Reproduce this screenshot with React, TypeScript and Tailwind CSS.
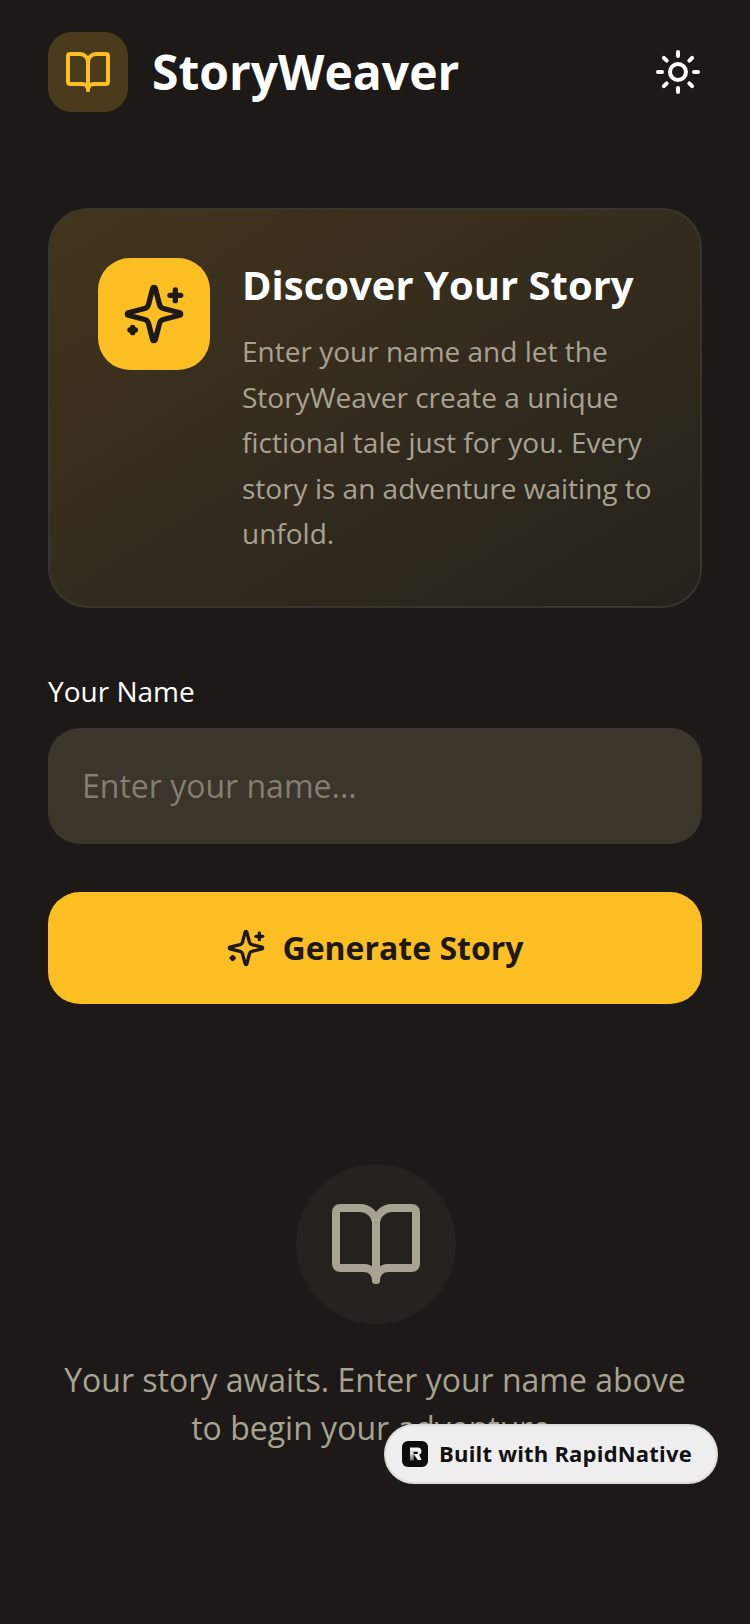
const font = "font-['Open_Sans','Noto_Sans',sans-serif]";

type IconProps = {
  size: number;
  strokeWidth?: number;
  className?: string;
};

const Icon = ({ size, strokeWidth = 2, className, children }: IconProps & { children: React.ReactNode }) => (
  <svg
    width={size}
    height={size}
    viewBox="0 0 24 24"
    fill="none"
    stroke="currentColor"
    strokeWidth={strokeWidth}
    strokeLinecap="round"
    strokeLinejoin="round"
    className={className}
  >
    {children}
  </svg>
);

const SparklesIcon = (props: IconProps) => (
  <Icon {...props}>
    <path d="M9.937 15.5A2 2 0 0 0 8.5 14.063l-6.135-1.582a.5.5 0 0 1 0-.962L8.5 9.936A2 2 0 0 0 9.937 8.5l1.582-6.135a.5.5 0 0 1 .963 0L14.063 8.5A2 2 0 0 0 15.5 9.937l6.135 1.581a.5.5 0 0 1 0 .964L15.5 14.063a2 2 0 0 0-1.437 1.437l-1.582 6.135a.5.5 0 0 1-.963 0z" />
    <path d="M20 3v4" />
    <path d="M22 5h-4" />
    <path d="M4 17v2" />
    <path d="M5 18H3" />
  </Icon>
);

const BookIcon = (props: IconProps) => (
  <Icon {...props}>
    <path d="M12 7v14" />
    <path d="M3 18a1 1 0 0 1-1-1V4a1 1 0 0 1 1-1h5a4 4 0 0 1 4 4 4 4 0 0 1 4-4h5a1 1 0 0 1 1 1v13a1 1 0 0 1-1 1h-6a3 3 0 0 0-3 3 3 3 0 0 0-3-3z" />
  </Icon>
);

const SunIcon = (props: IconProps) => (
  <Icon {...props}>
    <circle cx="12" cy="12" r="4" />
    <path d="M12 2v2" />
    <path d="M12 20v2" />
    <path d="m4.93 4.93 1.41 1.41" />
    <path d="m17.66 17.66 1.41 1.41" />
    <path d="M2 12h2" />
    <path d="M20 12h2" />
    <path d="m6.34 17.66-1.41 1.41" />
    <path d="m19.07 4.93-1.41 1.41" />
  </Icon>
);

const RapidLogo = () => (
  <div className="flex h-[26px] w-[26px] items-center justify-center rounded-[6px] bg-[#0d0d0e]">
    <svg width="20" height="20" viewBox="0 0 20 20">
      <defs>
        <linearGradient id="rapid-stem" x1="0" y1="0" x2="0" y2="1">
          <stop offset="0" stopColor="#f2f2f2" />
          <stop offset="1" stopColor="#6b6b6b" />
        </linearGradient>
      </defs>
      <path d="M5 3.5h7.5c2.6 0 4 1.5 4 3.7 0 1.7-1 3-2.5 3.4l2.6 5.4h-3.9L8.6 10h3.2c.8 0 1.1-.5 1.1-1.1s-.3-1.1-1.1-1.1H5z" fill="#f2f2f2" />
      <path d="M5 7.8h3.6v8.7H5z" fill="url(#rapid-stem)" />
    </svg>
  </div>
);

const App = () => {
  return (
    <div className={`relative h-[1624px] w-[750px] overflow-hidden bg-[#1c1917] ${font}`}>
      <header className="flex items-center justify-between px-12 pt-8">
        <div className="flex items-center gap-6">
          <div className="flex h-20 w-20 items-center justify-center rounded-3xl bg-[#4a3b1c]">
            <BookIcon size={48} className="text-[#fbbf24]" />
          </div>
          <h1 className="text-5xl leading-[60px] font-bold text-white">StoryWeaver</h1>
        </div>
        <SunIcon size={48} className="text-white" />
      </header>

      <main className="px-12 pt-24">
        <section className="flex gap-8 rounded-[40px] border-2 border-[#3a352c] bg-gradient-to-br from-[#42351c] to-[#25221d] px-12 pt-12 pb-[49px]">
          <div className="flex h-28 w-28 shrink-0 items-center justify-center rounded-[32px] bg-[#fbbf24]">
            <SparklesIcon size={64} className="text-[#1c1917]" />
          </div>
          <div>
            <h2 className="text-[40px] leading-[54px] font-bold text-white">Discover Your Story</h2>
            <p className="mt-[17px] text-[28px] leading-[45.5px] text-[#a8a292]">
              Enter your name and let the StoryWeaver create a unique fictional tale just for you. Every story is an
              adventure waiting to unfold.
            </p>
          </div>
        </section>

        <label className="mt-[63px] block text-[28px] leading-[40px] font-medium text-white">Your Name</label>
        <input
          placeholder="Enter your name..."
          className="mt-[17px] block h-[116px] w-full rounded-[32px] bg-[#3b352b] px-[34px] text-[32px] text-white placeholder:text-[#837e74]"
        />

        <button className="mt-12 flex h-28 w-full items-center justify-center gap-4 rounded-[32px] bg-[#fbbf24] text-[32px] font-bold text-[#1c1917]">
          <SparklesIcon size={40} />
          Generate Story
        </button>

        <div className="mt-[160px] flex flex-col items-center">
          <div className="ml-[2px] flex h-40 w-40 items-center justify-center rounded-full bg-[#25221e]">
            <BookIcon size={96} className="text-[#a8a292]" />
          </div>
          <p className="mt-8 text-center text-[32px] leading-[48px] text-[#a8a292]">
            Your story awaits. Enter your name above to begin your adventure.
          </p>
        </div>
      </main>

      <div className="absolute top-[1424px] left-[384px] flex h-[60px] w-[334px] items-center gap-[11px] rounded-full border-2 border-[#dcdcdc] bg-[#eeeeee] pl-[16px]">
        <RapidLogo />
        <span className="pb-[2px] text-[22px] font-bold tracking-[0.2px] text-[#111111]">Built with RapidNative</span>
      </div>
    </div>
  );
};

export default App;
